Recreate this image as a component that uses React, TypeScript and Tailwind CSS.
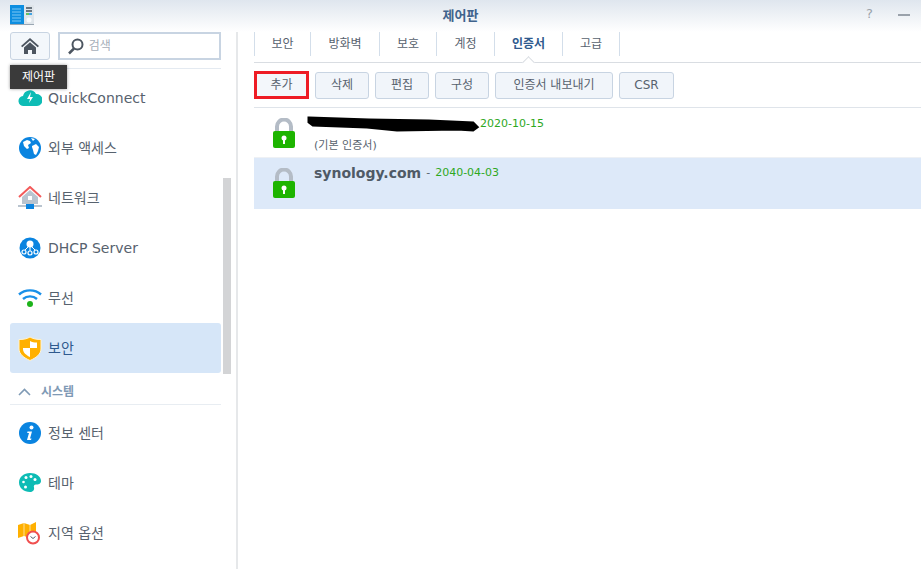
import { ReactNode } from 'react';

const font = { fontFamily: '"DejaVu Sans", "Noto Sans CJK KR", sans-serif' };

const AppLogo = () => (
  <svg width="24" height="20" viewBox="0 0 24 20">
    <rect x="0" y="0" width="14" height="19" fill="#0d8ee0" />
    <rect x="14" y="0" width="10" height="19" fill="#dfe5ea" />
    <path d="M2 4h9M2 7h9M2 10h9M2 13h9M2 16h9" stroke="#7cc8f5" strokeWidth="1" />
    <path d="M16 3h6M16 6h6" stroke="#44505c" strokeWidth="1.5" />
    <path d="M16 9h3" stroke="#3cb534" strokeWidth="1.5" />
    <path d="M19 9h3" stroke="#0d8ee0" strokeWidth="1.5" />
    <circle cx="19" cy="15" r="2.5" fill="#f7fafc" />
    <rect x="0" y="19" width="24" height="1" fill="#9aa7b3" />
  </svg>
);

const QuickConnectIcon = () => (
  <svg width="24" height="20" viewBox="0 0 24 20">
    <path d="M6 18a5 5 0 0 1-1-10 7 7 0 0 1 13-2 6 6 0 0 1 1 12z" fill="#0dbcb5" />
    <path d="M13 4l-4 7h3l-1 4 4-6h-3z" fill="#fff" />
  </svg>
);

const GlobeIcon = () => (
  <svg width="22" height="22" viewBox="0 0 22 22">
    <circle cx="11" cy="11" r="11" fill="#0a84e0" />
    <path d="M4 5l4-2 3 1 1 2-3 2 1 3-2 1-3-3zM13 9l4-2 3 3-1 4-2 4-2-1-1-4-1-3zM12 1l4 1-2 2z" fill="#fff" />
  </svg>
);

const HouseIcon = () => (
  <svg width="24" height="24" viewBox="0 0 24 24">
    <path d="M1 11L12 1l11 10" fill="none" stroke="#f35a5a" strokeWidth="2" />
    <path d="M4 11l8-7 8 7v7H4z" fill="#b9c4cf" />
    <rect x="10" y="10" width="4" height="4" fill="#fff" />
    <rect x="0" y="19" width="24" height="2" fill="#b9c4cf" />
    <rect x="8" y="18" width="8" height="5" fill="#0a84e0" />
  </svg>
);

const DhcpIcon = () => (
  <svg width="22" height="22" viewBox="0 0 22 22">
    <circle cx="11" cy="11" r="10.5" fill="#0a84e0" />
    <circle cx="11" cy="7" r="3.5" fill="#fff" />
    <path d="M11 9v5M9 10l-4 4M13 10l4 4" stroke="#fff" strokeWidth="1" />
    <g fill="#0a84e0" stroke="#fff" strokeWidth="1.2">
      <circle cx="5" cy="15" r="2" />
      <circle cx="11" cy="16" r="2" />
      <circle cx="17" cy="15" r="2" />
    </g>
  </svg>
);

const WifiIcon = () => (
  <svg width="24" height="20" viewBox="0 0 24 20">
    <path d="M1 6.5c6-5.500 16-5.500 22 0" fill="none" stroke="#1a90e8" strokeWidth="2.400" />
    <path d="M5 11c4-3.500 10-3.500 14 0" fill="none" stroke="#1a90e8" strokeWidth="2.400" />
    <circle cx="12" cy="16" r="3" fill="#1db31a" />
  </svg>
);

const ShieldIcon = () => (
  <svg width="24" height="25" viewBox="0 0 24 25">
    <path d="M12 1c3 2 7 2.500 11 2.500V13c0 5-5 9-11 11.500C6 22 1 18 1 13V3.500C5 3.500 9 3 12 1z" fill="#ffb000" stroke="#fff3d0" strokeWidth="1" />
    <path d="M12 5c2 1 4 1.500 7 1.500V12h-7zM12 12v9c-3-1.500-7-4-7-8v-1z" fill="#fff" />
  </svg>
);

const InfoIcon = () => (
  <svg width="22" height="22" viewBox="0 0 22 22">
    <circle cx="11" cy="11" r="11" fill="#0a84e0" />
    <circle cx="12.500" cy="5.500" r="2" fill="#fff" />
    <path d="M8.500 9.500h4.500l-2 7h1.500l-.5 1.500H8l2-7H8.200z" fill="#fff" />
  </svg>
);

const PaletteIcon = () => (
  <svg width="22" height="20" viewBox="0 0 22 20">
    <path d="M11 0c6 0 11 3.500 11 8 0 3-3 3.500-5 3.500-2 0-2.500 1.500-2 3 .5 2-.5 4.500-4 4.500C5 19 0 15 0 9.500 0 4 5 0 11 0z" fill="#0dbcb5" />
    <g fill="#fff">
      <circle cx="7" cy="4.500" r="1.500" />
      <circle cx="12" cy="3.500" r="1.500" />
      <circle cx="16" cy="6.500" r="1.500" />
      <circle cx="4.500" cy="9" r="1.300" />
      <circle cx="6.500" cy="14" r="1.500" />
    </g>
  </svg>
);

const RegionIcon = () => (
  <svg width="23" height="23" viewBox="0 0 23 23">
    <path d="M0 3l6-2 6 2 6-3v14l-6 2-6-2-6 2z" fill="#ffb000" />
    <path d="M6 1v15M12 3v13" stroke="#fff" strokeWidth=".6" />
    <circle cx="15" cy="15.500" r="6" fill="#fff" stroke="#f04f4f" strokeWidth="2" />
    <path d="M12.500 14.500l2.500 2 2.500-2" fill="none" stroke="#55606c" strokeWidth="1" />
  </svg>
);

const LockIcon = () => (
  <svg width="24" height="31" viewBox="0 0 24 31">
    <path d="M5 14V8.500a7 7 0 0 1 14 0V14" fill="none" stroke="#b4bcc6" strokeWidth="4" />
    <rect x="1" y="13" width="22" height="17" rx="2" fill="#1db400" />
    <circle cx="12" cy="20" r="2.500" fill="#fff" />
    <rect x="11" y="21" width="2" height="5" fill="#fff" />
  </svg>
);

const menuTop = [
  { label: 'QuickConnect', icon: <QuickConnectIcon /> },
  { label: '외부 액세스', icon: <GlobeIcon /> },
  { label: '네트워크', icon: <HouseIcon /> },
  { label: 'DHCP Server', icon: <DhcpIcon /> },
  { label: '무선', icon: <WifiIcon /> },
];

const menuSystem = [
  { label: '정보 센터', icon: <InfoIcon /> },
  { label: '테마', icon: <PaletteIcon /> },
  { label: '지역 옵션', icon: <RegionIcon /> },
];

const MenuItem = ({ label, icon, active }: { label: string; icon: ReactNode; active?: boolean }) => (
  <div className={`flex h-[50px] items-center rounded-[3px] ${active ? 'bg-[#d6e6f8] text-[#2f5a8e]' : 'text-[#57626e]'}`}>
    <div className="flex w-[38px] shrink-0 justify-center pl-[1px]">{icon}</div>
    <span className="text-[14px]">{label}</span>
  </div>
);

const tabs = [
  { label: '보안', width: 'w-[57px]' },
  { label: '방화벽', width: 'w-[69px]' },
  { label: '보호', width: 'w-[57px]' },
  { label: '계정', width: 'w-[58px]' },
  { label: '인증서', width: 'w-[68px]', active: true },
  { label: '고급', width: 'w-[57px]' },
];

const buttons = [
  { label: '삭제', width: 'w-[54px]' },
  { label: '편집', width: 'w-[54px]' },
  { label: '구성', width: 'w-[54px]' },
  { label: '인증서 내보내기', width: 'w-[118px]' },
  { label: 'CSR', width: 'w-[55px]' },
];

const App = () => {
  return (
    <div className="relative flex h-[569px] w-[921px] flex-col overflow-hidden bg-white" style={font}>
      {/* Title bar */}
      <div className="relative flex h-[32px] shrink-0 items-center justify-center bg-gradient-to-b from-[#dfe6ee] to-white">
        <div className="absolute left-[10px] top-[5px]">
          <AppLogo />
        </div>
        <span className="text-[13px] font-bold text-[#3f638c]">제어판</span>
        <span className="absolute left-[866px] top-[6px] text-[13px] leading-[16px] text-[#9aa2ab]">?</span>
        <div className="absolute left-[898px] top-[14px] h-[2px] w-[12px] bg-[#9aa2ab]" />
      </div>

      <div className="flex min-h-0 flex-1">
        {/* Sidebar */}
        <div className="relative w-[238px] shrink-0 overflow-hidden border-r-2 border-[#e6e8ea] pl-[10px] pr-[15px]">
          <div className="flex h-[37px] items-start gap-[8px] border-b border-[#e4eaf1]">
            <div className="flex h-[28px] w-[40px] items-center justify-center rounded-[3px] border border-[#c8d4e2] bg-[#f3f7fb]">
              <svg width="18" height="16" viewBox="0 0 18 16">
                <path d="M9 0L0 8l1.300 1.300L9 2.600l7.700 6.700L18 8z" fill="#4c5560" />
                <path d="M3 9.500L9 4.300l6 5.200V16h-4v-4H7v4H3z" fill="#4c5560" />
              </svg>
            </div>
            <div className="flex h-[28px] w-[164px] items-center border-2 border-[#c8d4e2] pl-[7px]">
              <svg width="17" height="17" viewBox="0 0 17 17">
                <circle cx="10.500" cy="6.500" r="5" fill="none" stroke="#4c5560" strokeWidth="2" />
                <path d="M7 10.500l-5 5" stroke="#4c5560" strokeWidth="2.500" />
              </svg>
              <span className="ml-[5px] text-[12px] text-[#a5aeb8]">검색</span>
            </div>
          </div>

          <div className="mt-[4px]">
            {menuTop.map(item => (
              <MenuItem key={item.label} label={item.label} icon={item.icon} />
            ))}
            <MenuItem label="보안" icon={<ShieldIcon />} active />
          </div>

          <div className="mt-[6px] flex h-[26px] items-center gap-[10px] border-b border-[#e8edf2] pl-[8px]">
            <svg width="13" height="8" viewBox="0 0 13 8">
              <path d="M1 7l5.500-5.500L12 7" fill="none" stroke="#7f9ab5" strokeWidth="1.600" />
            </svg>
            <span className="text-[12px] font-bold text-[#7f9ab5]">시스템</span>
          </div>

          <div className="mt-[3px]">
            {menuSystem.map(item => (
              <MenuItem key={item.label} label={item.label} icon={item.icon} />
            ))}
          </div>

          {/* Scrollbar */}
          <div className="absolute left-[223px] top-[146px] h-[196px] w-[8px] bg-[#d3d4d6]" />
        </div>

        {/* Content */}
        <div className="min-w-0 flex-1 pl-[16px]">
          <div className="relative flex h-[31px] border-b border-[#d9dde2]">
            {tabs.map((tab, i) => (
              <div
                key={tab.label}
                className={`flex h-[24px] items-center justify-center border-r border-[#d3deea] text-[12px] ${tab.width} ${i === 0 ? 'border-l' : ''} ${tab.active ? 'font-bold text-[#2f5a8e]' : 'text-[#57626e]'}`}
              >
                {tab.label}
              </div>
            ))}
            <div className="absolute left-[270px] top-[26px] size-[9px] rotate-45 border-l border-t border-[#d9dde2] bg-white" />
          </div>

          <div className="flex h-[45px] items-center gap-[6px] border-b border-[#dfe4ea]">
            <div className="flex h-[28px] w-[55px] items-center justify-center border-[3px] border-[#ee1c25] bg-[#f3f7fb] text-[12px] text-[#57626e]">
              추가
            </div>
            {buttons.map(btn => (
              <div
                key={btn.label}
                className={`flex h-[27px] items-center justify-center rounded-[3px] border border-[#c8d4e2] bg-[#f1f5fa] text-[12px] text-[#57626e] ${btn.width}`}
              >
                {btn.label}
              </div>
            ))}
          </div>

          {/* Certificate list */}
          <div className="relative flex h-[50px] border-b border-[#eef1f5]">
            <div className="flex w-[60px] shrink-0 justify-center pt-[10px]">
              <LockIcon />
            </div>
            <div className="pt-[8px]">
              <div className="flex h-[16px] items-center pl-[166px] text-[11px] text-[#2ea81e]">2020-10-15</div>
              <div className="mt-[6px] text-[11px] text-[#57626e]">(기본 인증서)</div>
            </div>
            <svg className="absolute left-[53px] top-[6px]" width="174" height="22" viewBox="0 0 174 22">
              <path d="M2 4l60 2 60 1 44 2 4 4-4 3-16-1-60 1-30-3-54-2-4-3z" fill="#000" stroke="#000" strokeWidth="3" />
            </svg>
          </div>
          <div className="flex h-[51px] bg-[#dde9f9]">
            <div className="flex w-[60px] shrink-0 justify-center pt-[10px]">
              <LockIcon />
            </div>
            <div className="flex h-[30px] items-center">
              <span className="text-[14px] font-bold text-[#4f5a66]">synology.com</span>
              <span className="ml-[5px] text-[11px] text-[#57626e]">-</span>
              <span className="ml-[5px] text-[11px] text-[#2ea81e]">2040-04-03</span>
            </div>
          </div>
        </div>
      </div>

      {/* Tooltip */}
      <div className="absolute left-[10px] top-[65px] flex h-[24px] w-[57px] items-center justify-center bg-[#3a3a3a] text-[12px] text-white shadow-[0_0_3px_rgba(0,0,0,0.4)]">
        제어판
      </div>
    </div>
  );
};

export default App;
